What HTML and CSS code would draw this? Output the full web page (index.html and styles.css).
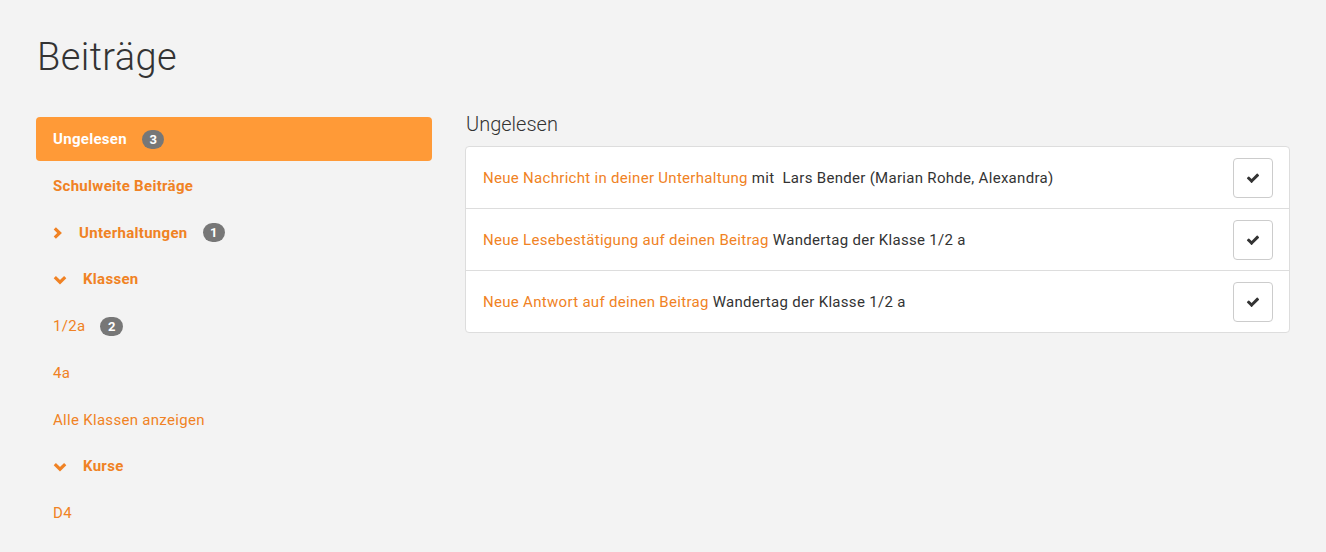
FILE: index.html
```html
<!DOCTYPE html>
<html lang="de">
<head>
  <meta charset="UTF-8" />
  <title>Beiträge</title>
  <link rel="stylesheet" href="styles.css">
</head>
<body>
  <div class="page">
    <h1>Beiträge</h1>

    <div class="layout">
      <nav class="sidebar">
        <a href="#" class="item bold active">Ungelesen <span class="badge">3</span></a>
        <a href="#" class="item bold">Schulweite Beiträge</a>
        <a href="#" class="item bold">
          <svg class="chev chev-right" width="9" height="12" viewBox="0 0 9 12"><polyline points="1.8,1.4 6.6,6 1.8,10.6" /></svg>
          Unterhaltungen <span class="badge">1</span>
        </a>
        <a href="#" class="item bold">
          <svg class="chev chev-down" width="14" height="10" viewBox="0 0 14 10"><polyline points="1.8,2.2 7,7.2 12.2,2.2" /></svg>
          Klassen
        </a>
        <a href="#" class="item">1/2a <span class="badge">2</span></a>
        <a href="#" class="item">4a</a>
        <a href="#" class="item">Alle Klassen anzeigen</a>
        <a href="#" class="item bold">
          <svg class="chev chev-down" width="14" height="10" viewBox="0 0 14 10"><polyline points="1.8,2.2 7,7.2 12.2,2.2" /></svg>
          Kurse
        </a>
        <a href="#" class="item">D4</a>
      </nav>

      <main class="content">
        <h2>Ungelesen</h2>
        <div class="card">
          <div class="row">
            <div class="text"><a href="#">Neue Nachricht in deiner Unterhaltung</a> mit&nbsp; Lars Bender (Marian Rohde, Alexandra)</div>
            <button class="check-btn"><svg width="14" height="14" viewBox="0 0 1792 1792"><path d="M1671 566q0 40-28 68l-724 724-136 136q-28 28-68 28t-68-28l-136-136-362-362q-28-28-28-68t28-68l136-136q28-28 68-28t68 28l294 295 656-657q28-28 68-28t68 28l136 136q28 28 28 68z"/></svg></button>
          </div>
          <div class="row">
            <div class="text"><a href="#">Neue Lesebestätigung auf deinen Beitrag</a> Wandertag der Klasse 1/2 a</div>
            <button class="check-btn"><svg width="14" height="14" viewBox="0 0 1792 1792"><path d="M1671 566q0 40-28 68l-724 724-136 136q-28 28-68 28t-68-28l-136-136-362-362q-28-28-28-68t28-68l136-136q28-28 68-28t68 28l294 295 656-657q28-28 68-28t68 28l136 136q28 28 28 68z"/></svg></button>
          </div>
          <div class="row">
            <div class="text"><a href="#">Neue Antwort auf deinen Beitrag</a> Wandertag der Klasse 1/2 a</div>
            <button class="check-btn"><svg width="14" height="14" viewBox="0 0 1792 1792"><path d="M1671 566q0 40-28 68l-724 724-136 136q-28 28-68 28t-68-28l-136-136-362-362q-28-28-28-68t28-68l136-136q28-28 68-28t68 28l294 295 656-657q28-28 68-28t68 28l136 136q28 28 28 68z"/></svg></button>
          </div>
        </div>
      </main>
    </div>
  </div>
</body>
</html>
```

FILE: styles.css
```css
:root {
  --orange: #f08224;
  --active: #ff9a37;
  --text: #333;
  --badge: #777;
  --border: #ddd;
  --background: #f3f3f3;
}

body {
  margin: 0;
  background: var(--background);
  color: var(--text);
  font-family: Roboto, "Noto Sans", sans-serif;
  font-size: 15px;
  line-height: 20px;
  letter-spacing: 0.3px;
}

.page {
  padding: 37px 36px 0 36px;
}

h1 {
  margin: 0 0 35px 1px;
  font-size: 38px;
  line-height: 40px;
  font-weight: 300;
  letter-spacing: 0.4px;
}

.layout {
  display: grid;
  grid-template-columns: 396px 1fr;
  gap: 33px;
}

.sidebar {
  display: flex;
  flex-direction: column;
  gap: 2.75px;
  padding-top: 5px;
}

.item {
  display: flex;
  align-items: center;
  height: 44px;
  box-sizing: border-box;
  padding: 12px 17px;
  color: var(--orange);
  text-decoration: none;
  border-radius: 4px;
}

.item.bold {
  font-weight: bold;
}

.item.active {
  background: var(--active);
  color: white;
}

.badge {
  display: inline-block;
  margin-left: 15px;
  padding: 3px 7.5px;
  font-size: 13px;
  line-height: 13px;
  font-weight: bold;
  letter-spacing: 0;
  color: white;
  background: var(--badge);
  border-radius: 10px;
}

.chev {
  fill: none;
  stroke: var(--orange);
  stroke-width: 3.2;
}

.chev-right {
  margin-right: 17px;
}

.chev-down {
  margin-right: 16px;
  margin-top: 2px;
}

h2 {
  margin: 0 0 10px 1px;
  font-size: 20px;
  line-height: 24px;
  font-weight: 300;
  letter-spacing: 0;
}

.card {
  background: white;
  border: 1px solid var(--border);
  border-radius: 4px;
}

.row {
  display: flex;
  align-items: center;
  justify-content: space-between;
  padding: 10.5px 16px 10.5px 17px;
  border-bottom: 1px solid var(--border);
}

.row:last-child {
  border-bottom: none;
}

.text a {
  color: var(--orange);
  text-decoration: none;
}

.check-btn {
  width: 40px;
  height: 40px;
  display: flex;
  align-items: center;
  justify-content: center;
  background: white;
  border: 1px solid #ccc;
  border-radius: 4px;
  padding: 0;
}

.check-btn svg {
  fill: var(--text);
}
```
